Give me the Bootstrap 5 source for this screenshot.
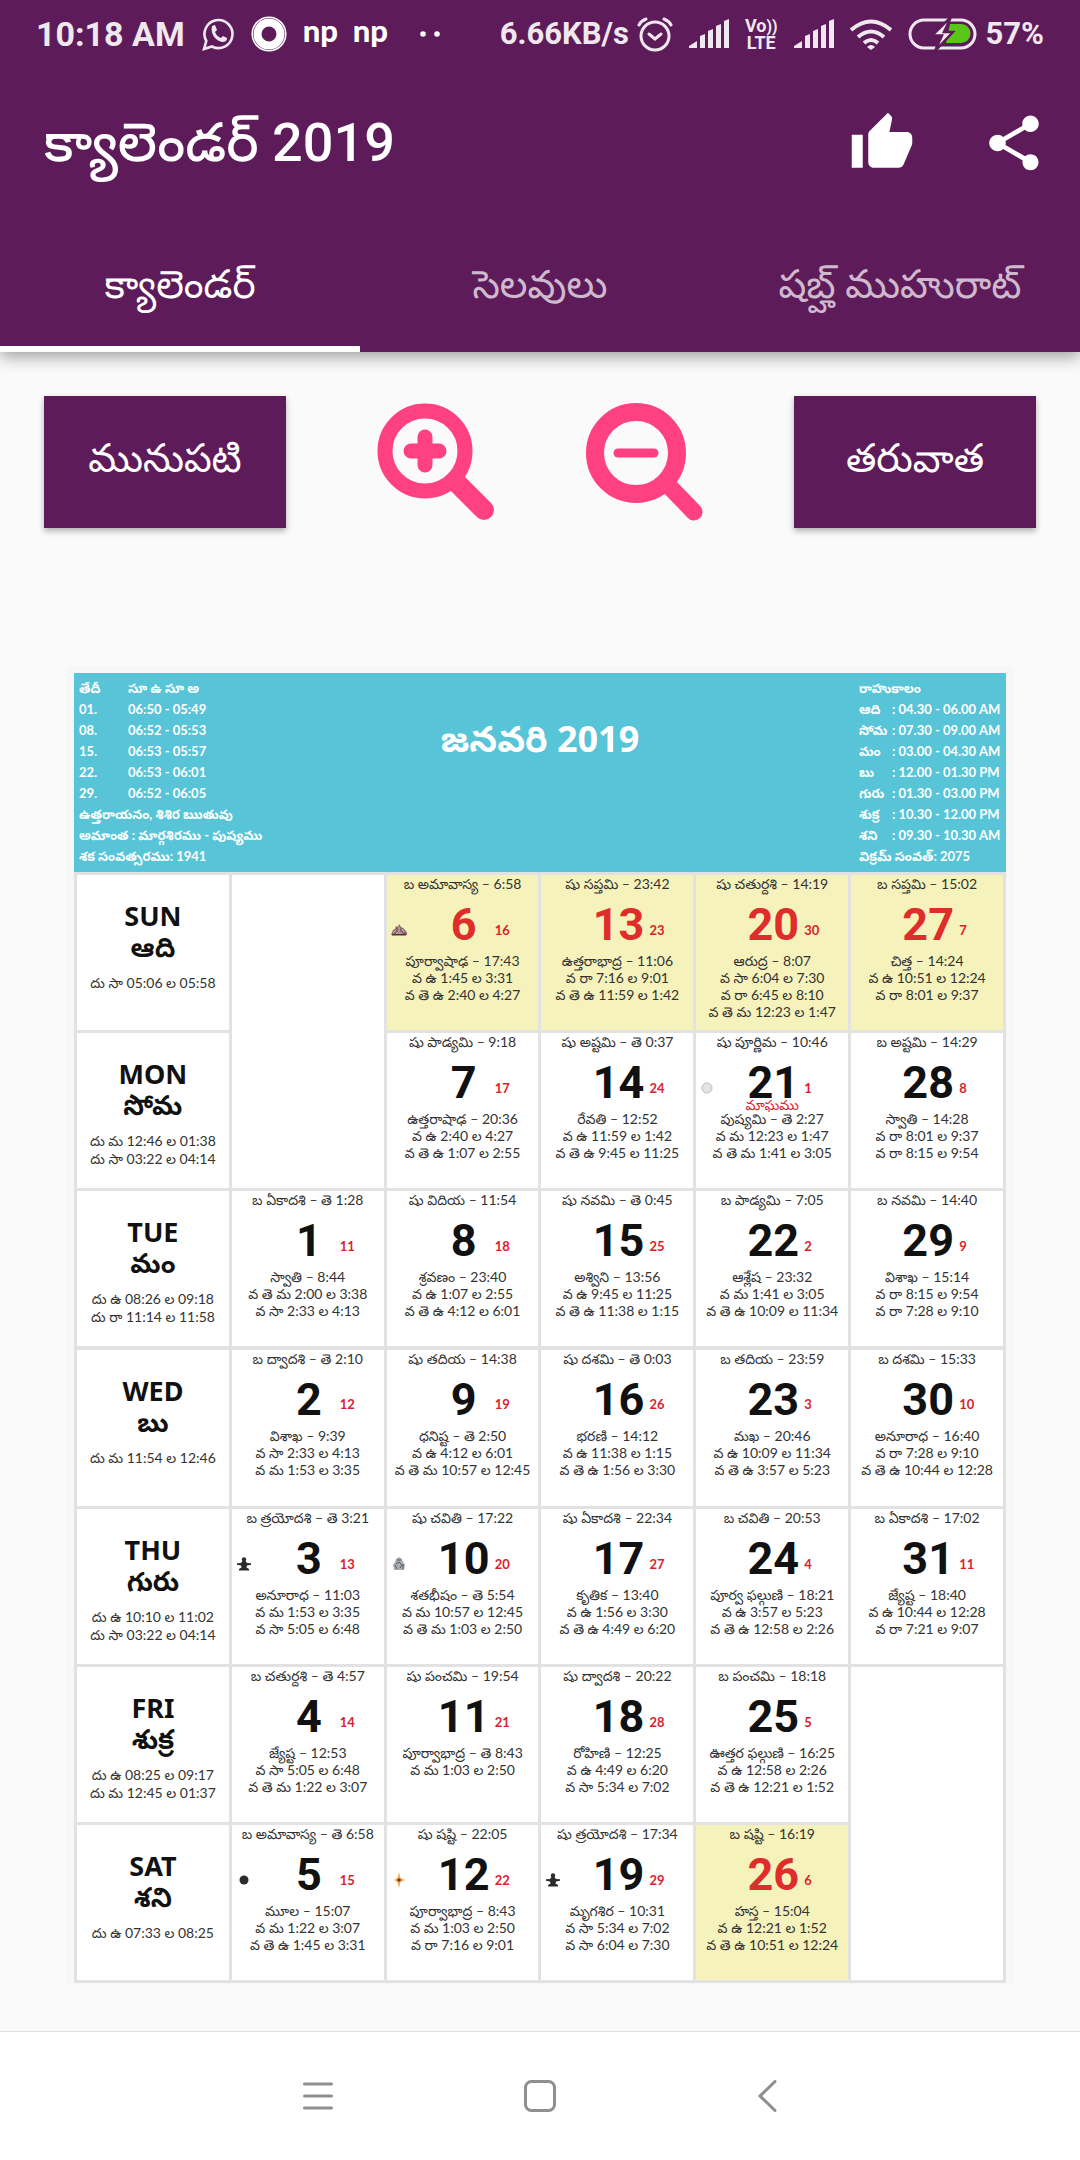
<!DOCTYPE html>
<html lang="te">
<head>
<meta charset="utf-8">
<meta name="viewport" content="width=device-width, initial-scale=1">
<title>క్యాలెండర్ 2019</title>
<link href="https://cdn.jsdelivr.net/npm/bootstrap@5.3.0/dist/css/bootstrap.min.css" rel="stylesheet">
<style>
:root{--plum:#5d1c59;--pink:#ff4081;--sky:#58c4d7;--rule:#e2e2e2;--red:#d9222c}
body{background:#fafafa;font-family:Roboto,"Noto Sans Telugu","Noto Sans",sans-serif}
svg{display:block;flex:none}
.app-head{background:var(--plum);box-shadow:0 4px 16px rgba(0,0,0,.4);z-index:2}
.status{height:68px;padding:0 36px;color:#f0e8ef;font-weight:700;font-size:31px;line-height:40px;gap:16px}
.status .clock{font-size:34px}
.volte{font-size:18px;line-height:16px;text-align:center}
.np-logo{font-family:Lato,sans-serif;font-weight:900;font-size:31px;line-height:30px;width:34px;padding-bottom:8px}
.toolbar-row{height:156px;padding:0 33px 6px 44px}
.toolbar-row h1{font-size:54px;line-height:72px;font-weight:500}
.tool-set{gap:66px}
.icon-btn{border:0;background:none;padding:0;color:#fff}
.tab-row{height:128px}
.tab-row .nav-link{border-bottom:6px solid transparent;border-radius:0;color:#cfb9ce;font-size:39px;line-height:48px;padding:0;height:128px}
.tab-row .nav-link.active{background:none;color:#fff;border-color:#fff}
.controls{padding:44px 44px 0}
.btn-plum{background:var(--plum);color:#fff;border:0;border-radius:0;width:242px;height:132px;font-size:39px;padding:0 0 6px;box-shadow:0 3px 6px rgba(0,0,0,.3)}
.cal-frame{margin:138px 67px 46px;padding:7px 7px 2px;background:#f6f7f7}
.cal-head{background:var(--sky);color:#fff;height:199px;padding:5px 5px 0;font-family:Lato,"Noto Sans Telugu",sans-serif;font-weight:700;font-size:13px;line-height:21px}
.cal-head dl,.cal-head dt,.cal-head dd{margin:0;font-weight:700}
.sun-list{display:grid;grid-template-columns:49px auto}
.rahu-list{display:grid;grid-template-columns:33px auto}
.head-side{width:250px;white-space:nowrap}
.rahu-box{width:142px}
.cal-head h2{font-family:"Noto Sans","Noto Sans Telugu",sans-serif;font-size:36px;line-height:48px;font-weight:700;padding-top:37px}
.month-grid{width:100%;table-layout:fixed;border-collapse:collapse;background:#fff;font-family:Lato,"Noto Sans Telugu",sans-serif;font-size:14px;line-height:17px;color:#333;text-align:center}
.month-grid th,.month-grid td{height:158px;border:3px solid var(--rule);padding:0;vertical-align:top;white-space:nowrap;font-weight:400}
.month-grid .thick>*{border-top-width:4px;height:160px}
.month-grid .hol{background:#f6f2bb}
.month-grid p{margin:0}
.wday{font-family:"Noto Sans","Noto Sans Telugu",sans-serif;font-size:27px;line-height:31px;font-weight:700;color:#111;padding:25px 0 12px}
.duh{line-height:18px}
.date-row{display:grid;grid-template-columns:46px 62px 1fr;height:60px;align-items:center;position:relative}
.date-row svg{margin:16px 0 0 4px}
.date-row b{grid-column:2;font-family:"Roboto Slab",Roboto,sans-serif;font-size:45px;line-height:54px;color:#111;justify-self:center;padding-top:6px}
.hol .date-row b{color:#de2d2b}
.date-row i{grid-column:3;font-style:normal;font-weight:700;font-size:13px;color:var(--red);text-align:left;padding-top:16px}
.date-row svg,.date-row b,.date-row i{grid-row:1}
.date-row em{position:absolute;left:0;right:0;bottom:-3px;line-height:16px;font-style:normal;color:var(--red)}
.sys-nav{height:130px;background:#fff;border-top:1px solid #e2e2e2;padding:0 302px 2px}
</style>
<script src="https://cdn.jsdelivr.net/npm/bootstrap@5.3.0/dist/js/bootstrap.bundle.min.js"></script>
</head>
<body class="d-flex flex-column min-vh-100">

<svg width="0" height="0" class="position-absolute" aria-hidden="true">
  <symbol id="bars" viewBox="0 0 40 30"><path fill="currentColor" d="M0 29v-2l8-5v7zM11 29V17l5-2v14zM19 29V12l5-2v19zM27 29V7l5-2v24zM35 29V2l5-2v29z"/></symbol>
  <symbol id="monk" viewBox="0 0 16 16"><circle cx="8" cy="3.500" r="2.200" fill="#2b2b2b"/><path fill="#2b2b2b" d="M6.500 5h3l1.500 2 4 .2v1.600L11 9.500l-.5 2L13 13v1.500H3V13l2.500-1.500-.5-2L1 8.800V7.200L5 7z"/></symbol>
</svg>

<header class="app-head position-relative">
  <div class="status d-flex align-items-center">
    <span class="clock">10:18 AM</span>
    <svg width="34" height="34" viewBox="0 0 34 34" fill="none" stroke="currentColor" stroke-width="2.600"><path d="M3 32l2.300-8A14 14 0 1 1 11 29.500z"/><path fill="currentColor" stroke="none" d="M11 9l3-1 2 5-2 2c1 3 3 5 6 6l2-2 4 2c0 3-2 4-5 4-6-1-12-8-10-16z"/></svg>
    <svg width="36" height="36" viewBox="0 0 36 36" fill="none" stroke="#fff"><circle cx="18" cy="18" r="11.500" stroke-width="8"/><circle cx="18" cy="18" r="16.800" stroke-width="1.500"/></svg>
    <span class="np-logo text-white">np</span>
    <span class="np-logo text-white">np</span>
    <svg class="ms-3" width="24" height="8" viewBox="0 0 24 8" fill="#fff"><circle cx="4" cy="4" r="2.800"/><circle cx="18" cy="4" r="2.800"/></svg>
    <span class="d-flex align-items-center gap-2 ms-auto">6.66KB/s
      <svg width="36" height="36" viewBox="0 0 36 36" fill="none" stroke="currentColor" stroke-width="3"><circle cx="18" cy="20" r="14"/><path stroke-linecap="round" d="M2 9q2-4 7-6M34 9q-2-4-7-6M12 18l6 5 6-5"/></svg></span>
    <svg width="40" height="30"><use href="#bars"/></svg>
    <span class="volte">Vo<small>))</small><br>LTE</span>
    <svg width="40" height="30"><use href="#bars"/></svg>
    <svg width="42" height="31" viewBox="0 0 42 31" fill="none" stroke="currentColor" stroke-width="4"><path d="M1 11q20-17 40 0M8 18q13-11 26 0M14 24q7-6 14 0"/><path fill="currentColor" stroke="none" d="M17 28q4-4 8 0l-4 3z"/></svg>
    <span class="d-flex align-items-center gap-2">
      <svg width="70" height="32" viewBox="0 0 70 32"><rect x="2" y="2" width="65" height="28" rx="14" fill="none" stroke="currentColor" stroke-width="3"/><path fill="#5ac61a" d="M42 6h11a9.500 9.500 0 0 1 0 19H38z"/><path fill="currentColor" stroke="#5d1c59" stroke-width="2.500" d="M43-1L24 17.500h10L27 33l18-19H36z"/></svg>
      57%</span>
  </div>
  <div class="toolbar-row d-flex align-items-center text-white">
    <h1 class="m-0 me-auto">క్యాలెండర్ 2019</h1>
    <div class="tool-set d-flex">
    <button class="icon-btn" aria-label="Like"><svg width="66" height="66" viewBox="0 0 24 24" fill="currentColor"><path d="M1 21h4V9H1v12zm22-11c0-1.100-.9-2-2-2h-6.310l.95-4.570.03-.32c0-.41-.17-.79-.44-1.060L14.170 1 7.590 7.590C7.220 7.950 7 8.450 7 9v10c0 1.100.9 2 2 2h9c.83 0 1.540-.5 1.840-1.220l3.020-7.050c.09-.23.14-.47.14-.73v-2z"/></svg></button>
    <button class="icon-btn" aria-label="Share"><svg width="66" height="66" viewBox="0 0 24 24" fill="currentColor"><path d="M18 16.080c-.76 0-1.440.3-1.960.77L8.910 12.700c.05-.23.09-.46.09-.7s-.04-.47-.09-.7l7.050-4.110c.54.5 1.250.81 2.040.81 1.660 0 3-1.340 3-3s-1.340-3-3-3-3 1.340-3 3c0 .24.04.47.09.7L8.040 9.810C7.500 9.310 6.790 9 6 9c-1.660 0-3 1.340-3 3s1.340 3 3 3c.79 0 1.500-.31 2.040-.81l7.120 4.160c-.05.21-.08.43-.08.65 0 1.610 1.310 2.920 2.920 2.920s2.920-1.310 2.920-2.920-1.310-2.920-2.920-2.920z"/></svg></button>
    </div>
  </div>
  <nav class="tab-row nav nav-fill flex-nowrap">
    <a class="nav-link active w-100 d-flex align-items-center justify-content-center" href="#">క్యాలెండర్</a>
    <a class="nav-link w-100 d-flex align-items-center justify-content-center" href="#">సెలవులు</a>
    <a class="nav-link w-100 d-flex align-items-center justify-content-center" href="#">షబ్హ్ ముహురాట్</a>
  </nav>
</header>

<main>
  <div class="controls d-flex justify-content-between align-items-center">
    <button class="btn btn-plum">మునుపటి</button>
    <button class="icon-btn" aria-label="Zoom in"><svg width="118" height="118" viewBox="0 0 118 118" fill="none" stroke="#ff4081"><circle cx="48" cy="48" r="40" stroke-width="15"/><path stroke-width="20" stroke-linecap="round" d="M78 78l29 29"/><path stroke-width="15" stroke-linecap="round" d="M34 48h28M48 34v28"/></svg></button>
    <button class="icon-btn" aria-label="Zoom out"><svg width="118" height="118" viewBox="-1 0 118 118" fill="none" stroke="#ff4081"><circle cx="50" cy="50" r="41" stroke-width="18"/><path stroke-width="17" stroke-linecap="round" d="M80 80l28 29"/><path stroke-width="9" stroke-linecap="round" d="M32 50h36"/></svg></button>
    <button class="btn btn-plum">తరువాత</button>
  </div>

  <section class="cal-frame">
    <div class="cal-head d-flex justify-content-between">
      <div class="head-side">
        <dl class="sun-list"><dt>తేదీ</dt><dd>సూ ఉ సూ అ</dd><dt>01.</dt><dd>06:50 - 05:49</dd><dt>08.</dt><dd>06:52 - 05:53</dd><dt>15.</dt><dd>06:53 - 05:57</dd><dt>22.</dt><dd>06:53 - 06:01</dd><dt>29.</dt><dd>06:52 - 06:05</dd></dl>
        <div>ఉత్తరాయనం, శిశిర ఋతువు</div>
        <div>అమాంత : మార్గశిరము - పుష్యము</div>
        <div>శక సంవత్సరము: 1941</div>
      </div>
      <h2 class="m-0">జనవరి 2019</h2>
      <div class="head-side d-flex justify-content-end">
        <div class="rahu-box">
          <div>రాహుకాలం</div>
          <dl class="rahu-list"><dt>ఆది</dt><dd>: 04.30 - 06.00 AM</dd><dt>సోమ</dt><dd>: 07.30 - 09.00 AM</dd><dt>మం</dt><dd>: 03.00 - 04.30 AM</dd><dt>బు</dt><dd>: 12.00 - 01.30 PM</dd><dt>గురు</dt><dd>: 01.30 - 03.00 PM</dd><dt>శుక్ర</dt><dd>: 10.30 - 12.00 PM</dd><dt>శని</dt><dd>: 09.30 - 10.30 AM</dd></dl>
          <div>విక్రమ్ సంవత్: 2075</div>
        </div>
      </div>
    </div>

    <table class="month-grid">
      <tbody>
      <tr>
        <th scope="row"><div class="wday">SUN<br>ఆది</div><p class="duh">దు సా 05:06 ల 05:58</p></th>
        <td rowspan="2"></td>
        <td class="hol"><p>బ అమావాస్య – 6:58</p><div class="date-row"><svg width="16" height="14" viewBox="0 0 16 14"><path fill="#8a6470" d="M0 12l2-5 2-1 1-3 2 1 1-3 2 3 2 1 2 2 2 3v2z"/><path stroke="#e0c4b0" d="M2 10l3-3M8 4v5M11 6l2 3M5 10h6" fill="none"/><path fill="#4a3843" d="M1 11h14v1.500H1z"/></svg><b>6</b><i>16</i></div><p>పూర్వాషాఢ – 17:43</p><p>వ ఉ 1:45 ల 3:31</p><p>వ తె ఉ 2:40 ల 4:27</p></td>
        <td class="hol"><p>షు సప్తమి – 23:42</p><div class="date-row"><b>13</b><i>23</i></div><p>ఉత్తరాభాద్ర – 11:06</p><p>వ రా 7:16 ల 9:01</p><p>వ తె ఉ 11:59 ల 1:42</p></td>
        <td class="hol"><p>షు చతుర్దశి – 14:19</p><div class="date-row"><b>20</b><i>30</i></div><p>ఆరుద్ర – 8:07</p><p>వ సా 6:04 ల 7:30</p><p>వ రా 6:45 ల 8:10</p><p>వ తె మ 12:23 ల 1:47</p></td>
        <td class="hol"><p>బ సప్తమి – 15:02</p><div class="date-row"><b>27</b><i>7</i></div><p>చిత్త – 14:24</p><p>వ ఉ 10:51 ల 12:24</p><p>వ రా 8:01 ల 9:37</p></td>
      </tr>
      <tr>
        <th scope="row"><div class="wday">MON<br>సోమ</div><p class="duh">దు మ 12:46 ల 01:38</p><p class="duh">దు సా 03:22 ల 04:14</p></th>
        <td><p>షు పాడ్యమి – 9:18</p><div class="date-row"><b>7</b><i>17</i></div><p>ఉత్తరాషాఢ – 20:36</p><p>వ ఉ 2:40 ల 4:27</p><p>వ తె ఉ 1:07 ల 2:55</p></td>
        <td><p>షు అష్టమి – తె 0:37</p><div class="date-row"><b>14</b><i>24</i></div><p>రేవతి – 12:52</p><p>వ ఉ 11:59 ల 1:42</p><p>వ తె ఉ 9:45 ల 11:25</p></td>
        <td><p>షు పూర్ణిమ – 10:46</p><div class="date-row"><svg width="14" height="14" viewBox="0 0 14 14"><circle cx="7" cy="7" r="5" fill="#e4e4e4" stroke="#bdbdbd"/></svg><b>21</b><i>1</i><em>మాఘము</em></div><p>పుష్యమి – తె 2:27</p><p>వ మ 12:23 ల 1:47</p><p>వ తె మ 1:41 ల 3:05</p></td>
        <td><p>బ అష్టమి – 14:29</p><div class="date-row"><b>28</b><i>8</i></div><p>స్వాతి – 14:28</p><p>వ రా 8:01 ల 9:37</p><p>వ రా 8:15 ల 9:54</p></td>
      </tr>
      <tr>
        <th scope="row"><div class="wday">TUE<br>మం</div><p class="duh">దు ఉ 08:26 ల 09:18</p><p class="duh">దు రా 11:14 ల 11:58</p></th>
        <td><p>బ ఏకాదశి – తె 1:28</p><div class="date-row"><b>1</b><i>11</i></div><p>స్వాతి – 8:44</p><p>వ తె మ 2:00 ల 3:38</p><p>వ సా 2:33 ల 4:13</p></td>
        <td><p>షు విదియ – 11:54</p><div class="date-row"><b>8</b><i>18</i></div><p>శ్రవణం – 23:40</p><p>వ ఉ 1:07 ల 2:55</p><p>వ తె ఉ 4:12 ల 6:01</p></td>
        <td><p>షు నవమి – తె 0:45</p><div class="date-row"><b>15</b><i>25</i></div><p>అశ్విని – 13:56</p><p>వ ఉ 9:45 ల 11:25</p><p>వ తె ఉ 11:38 ల 1:15</p></td>
        <td><p>బ పాడ్యమి – 7:05</p><div class="date-row"><b>22</b><i>2</i></div><p>ఆశ్లేష – 23:32</p><p>వ మ 1:41 ల 3:05</p><p>వ తె ఉ 10:09 ల 11:34</p></td>
        <td><p>బ నవమి – 14:40</p><div class="date-row"><b>29</b><i>9</i></div><p>విశాఖ – 15:14</p><p>వ రా 8:15 ల 9:54</p><p>వ రా 7:28 ల 9:10</p></td>
      </tr>
      <tr class="thick">
        <th scope="row"><div class="wday">WED<br>బు</div><p class="duh">దు మ 11:54 ల 12:46</p></th>
        <td><p>బ ద్వాదశి – తె 2:10</p><div class="date-row"><b>2</b><i>12</i></div><p>విశాఖ – 9:39</p><p>వ సా 2:33 ల 4:13</p><p>వ మ 1:53 ల 3:35</p></td>
        <td><p>షు తదియ – 14:38</p><div class="date-row"><b>9</b><i>19</i></div><p>ధనిష్ట – తె 2:50</p><p>వ ఉ 4:12 ల 6:01</p><p>వ తె మ 10:57 ల 12:45</p></td>
        <td><p>షు దశమి – తె 0:03</p><div class="date-row"><b>16</b><i>26</i></div><p>భరణి – 14:12</p><p>వ ఉ 11:38 ల 1:15</p><p>వ తె ఉ 1:56 ల 3:30</p></td>
        <td><p>బ తదియ – 23:59</p><div class="date-row"><b>23</b><i>3</i></div><p>మఖ – 20:46</p><p>వ ఉ 10:09 ల 11:34</p><p>వ తె ఉ 3:57 ల 5:23</p></td>
        <td><p>బ దశమి – 15:33</p><div class="date-row"><b>30</b><i>10</i></div><p>అనూరాధ – 16:40</p><p>వ రా 7:28 ల 9:10</p><p>వ తె ఉ 10:44 ల 12:28</p></td>
      </tr>
      <tr>
        <th scope="row"><div class="wday">THU<br>గురు</div><p class="duh">దు ఉ 10:10 ల 11:02</p><p class="duh">దు సా 03:22 ల 04:14</p></th>
        <td><p>బ త్రయోదశి – తె 3:21</p><div class="date-row"><svg width="16" height="16"><use href="#monk"/></svg><b>3</b><i>13</i></div><p>అనూరాధ – 11:03</p><p>వ మ 1:53 ల 3:35</p><p>వ సా 5:05 ల 6:48</p></td>
        <td><p>షు చవితి – 17:22</p><div class="date-row"><svg width="16" height="16" viewBox="0 0 16 16"><path fill="#a9adb2" d="M8 1l3 2 1 3 2 3-1 5H3L2 9l2-3 1-3z"/><path fill="none" stroke="#555b62" d="M6 4h4M5 8l3-2 3 3-2 3M4 9l2 4M12 8v5"/></svg><b>10</b><i>20</i></div><p>శతభీషం – తె 5:54</p><p>వ మ 10:57 ల 12:45</p><p>వ తె మ 1:03 ల 2:50</p></td>
        <td><p>షు ఏకాదశి – 22:34</p><div class="date-row"><b>17</b><i>27</i></div><p>కృతిక – 13:40</p><p>వ ఉ 1:56 ల 3:30</p><p>వ తె ఉ 4:49 ల 6:20</p></td>
        <td><p>బ చవితి – 20:53</p><div class="date-row"><b>24</b><i>4</i></div><p>పూర్వ ఫల్గుణి – 18:21</p><p>వ ఉ 3:57 ల 5:23</p><p>వ తె ఉ 12:58 ల 2:26</p></td>
        <td><p>బ ఏకాదశి – 17:02</p><div class="date-row"><b>31</b><i>11</i></div><p>జ్యేష్ట – 18:40</p><p>వ ఉ 10:44 ల 12:28</p><p>వ రా 7:21 ల 9:07</p></td>
      </tr>
      <tr>
        <th scope="row"><div class="wday">FRI<br>శుక్ర</div><p class="duh">దు ఉ 08:25 ల 09:17</p><p class="duh">దు మ 12:45 ల 01:37</p></th>
        <td><p>బ చతుర్దశి – తె 4:57</p><div class="date-row"><b>4</b><i>14</i></div><p>జ్యేష్ట – 12:53</p><p>వ సా 5:05 ల 6:48</p><p>వ తె మ 1:22 ల 3:07</p></td>
        <td><p>షు పంచమి – 19:54</p><div class="date-row"><b>11</b><i>21</i></div><p>పూర్వాభాద్ర – తె 8:43</p><p>వ మ 1:03 ల 2:50</p></td>
        <td><p>షు ద్వాదశి – 20:22</p><div class="date-row"><b>18</b><i>28</i></div><p>రోహిణి – 12:25</p><p>వ ఉ 4:49 ల 6:20</p><p>వ సా 5:34 ల 7:02</p></td>
        <td><p>బ పంచమి – 18:18</p><div class="date-row"><b>25</b><i>5</i></div><p>ఊత్తర ఫల్గుణి – 16:25</p><p>వ ఉ 12:58 ల 2:26</p><p>వ తె ఉ 12:21 ల 1:52</p></td>
        <td rowspan="2"></td>
      </tr>
      <tr>
        <th scope="row"><div class="wday">SAT<br>శని</div><p class="duh">దు ఉ 07:33 ల 08:25</p></th>
        <td><p>బ అమావాస్య – తె 6:58</p><div class="date-row"><svg width="16" height="14" viewBox="0 0 16 14"><circle cx="8" cy="7" r="4.500" fill="#2b2b2b"/></svg><b>5</b><i>15</i></div><p>మూల – 15:07</p><p>వ మ 1:22 ల 3:07</p><p>వ తె ఉ 1:45 ల 3:31</p></td>
        <td><p>షు షష్టి – 22:05</p><div class="date-row"><svg width="16" height="16" viewBox="0 0 16 16"><path fill="#f0b050" d="M8 0l1.500 6L14 8l-4.500 2L8 16l-1.500-6L3 8l3.500-2z"/><circle cx="8" cy="8" r="1.800" fill="#7c3a1c"/></svg><b>12</b><i>22</i></div><p>పూర్వాభాద్ర – 8:43</p><p>వ మ 1:03 ల 2:50</p><p>వ రా 7:16 ల 9:01</p></td>
        <td><p>షు త్రయోదశి – 17:34</p><div class="date-row"><svg width="16" height="16"><use href="#monk"/></svg><b>19</b><i>29</i></div><p>మృగశిర – 10:31</p><p>వ సా 5:34 ల 7:02</p><p>వ సా 6:04 ల 7:30</p></td>
        <td class="hol"><p>బ షష్టి – 16:19</p><div class="date-row"><b>26</b><i>6</i></div><p>హస్త – 15:04</p><p>వ ఉ 12:21 ల 1:52</p><p>వ తె ఉ 10:51 ల 12:24</p></td>
      </tr>
      </tbody>
    </table>
  </section>
</main>

<footer class="sys-nav mt-auto">
  <div class="h-100 d-flex justify-content-between align-items-center">
    <button class="icon-btn" aria-label="Recent apps"><svg width="32" height="32" viewBox="0 0 32 32" stroke="#8f8f8f" stroke-width="3" stroke-linecap="round"><path d="M2.500 4h27M2.500 16h27M2.500 28h27"/></svg></button>
    <button class="icon-btn" aria-label="Home"><svg width="32" height="32" viewBox="0 0 32 32" fill="none" stroke="#8f8f8f" stroke-width="3"><rect x="1.500" y="1.500" width="29" height="29" rx="6"/></svg></button>
    <button class="icon-btn" aria-label="Back"><svg width="32" height="32" viewBox="0 0 32 32" fill="none" stroke="#8f8f8f" stroke-width="3" stroke-linecap="round"><path d="M29 1.500L14 16l15 14.500"/></svg></button>
  </div>
</footer>
</body>
</html>
